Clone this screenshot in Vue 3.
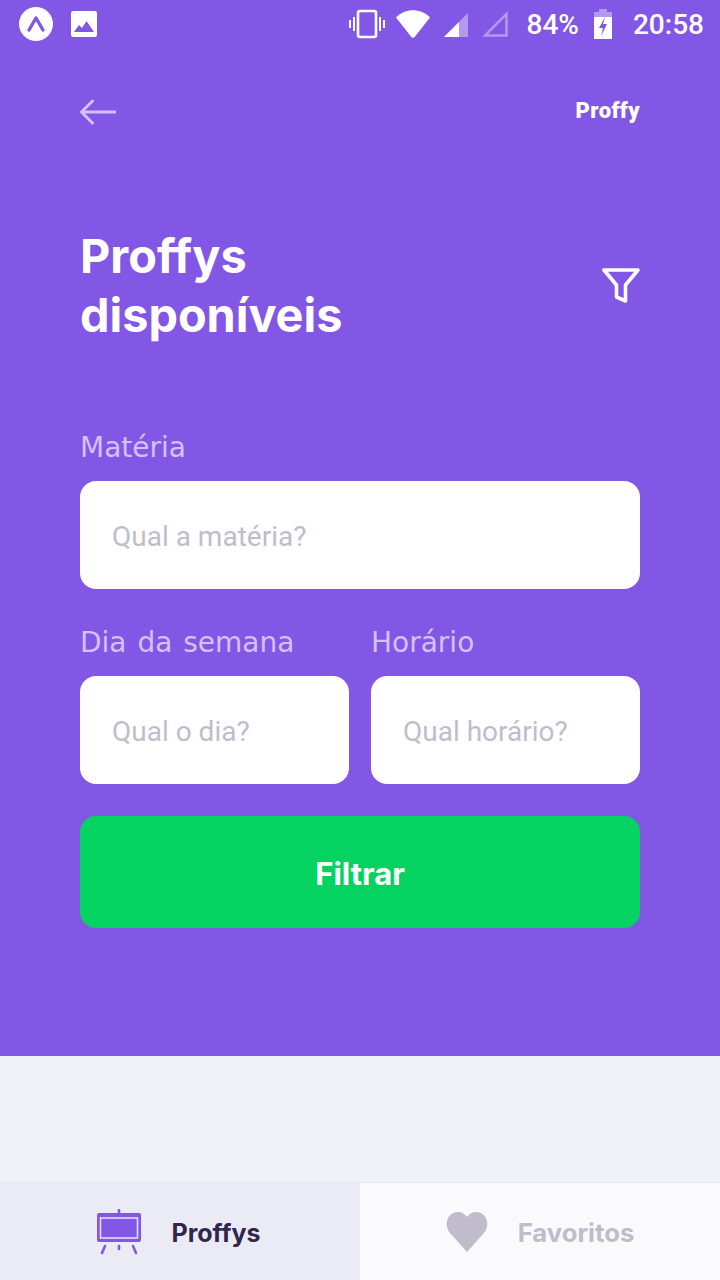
<template>
  <div class="screen">
    <section class="hero">
      <!-- Status bar -->
      <div class="status-bar">
        <div class="status-left">
          <svg class="ic-expo" width="36" height="36" viewBox="0 0 36 36">
            <circle cx="18" cy="18" r="17" fill="#fff" />
            <path d="M11 24 L18 12 L25 24" fill="none" stroke="#8257E5" stroke-width="3.4" stroke-linecap="round" stroke-linejoin="round" />
          </svg>
          <svg width="26" height="26" viewBox="0 0 26 26">
            <rect width="26" height="26" rx="2" fill="#fff" />
            <path d="M3 21 L8 14 L11 17 L15.500 10 L23 21 Z" fill="#8257E5" />
          </svg>
        </div>
        <div class="status-right">
          <svg width="36" height="30" viewBox="0 0 36 30" fill="none" stroke="#fff">
            <rect x="9" y="2" width="18" height="26" rx="2" stroke-width="2.600" />
            <path d="M5 8 V22 M31 8 V22" stroke-width="2" />
            <path d="M1 11 V19 M35 11 V19" stroke-width="2" />
          </svg>
          <svg class="ic-wifi" width="34" height="30" viewBox="0 0 36 30">
            <path d="M0 8 C10 -2 26 -2 36 8 L19.500 29 Q18 30 16.500 29 Z" fill="#fff" />
          </svg>
          <svg class="ic-signal" width="26" height="26" viewBox="0 0 26 26">
            <path d="M0 26 L24 2 V26 Z" fill="#fff" fill-opacity="0.4" />
            <path d="M0 26 L15 11 V26 Z" fill="#fff" />
          </svg>
          <svg class="ic-signal2" width="26" height="26" viewBox="0 0 26 26">
            <path d="M3 24.500 L24.500 3 V24.500 Z" fill="none" stroke="#fff" stroke-opacity="0.4" stroke-width="2.400" />
          </svg>
          <span class="pct">84%</span>
          <svg class="ic-batt" width="18" height="30" viewBox="0 0 18 30">
            <path d="M5 0 H13 V3 H18 V8 H0 V3 H5 Z" fill="#fff" fill-opacity="0.4" />
            <path d="M0 8 H18 V30 H0 Z" fill="#fff" />
            <path d="M11 8 L5 19 H9 L7 27 L13 15 H9 Z" fill="#8257E5" />
          </svg>
          <span class="clock">20:58</span>
        </div>
      </div>

      <!-- Top bar -->
      <div class="top-bar">
        <svg width="36" height="26" viewBox="0 0 36 26" fill="none" stroke="#D4C2FF" stroke-width="3" stroke-linecap="round" stroke-linejoin="round">
          <path d="M1.500 13 H35 M12.500 2 L1.500 13 L12.500 24" />
        </svg>
        <span class="logo">Proffy</span>
      </div>

      <!-- Title -->
      <div class="title-row">
        <h1 class="title">Proffys<br />disponíveis</h1>
        <svg class="ic-filter" width="38" height="36" viewBox="0 0 38 36" fill="none" stroke="#fff" stroke-width="3.600" stroke-linejoin="round">
          <path d="M2 2 H36 L23.500 17 V33 L14.500 29 V17 Z" />
        </svg>
      </div>

      <!-- Form -->
      <form class="filters" @submit.prevent>
        <div class="field">
          <label class="label">Matéria</label>
          <input class="input" placeholder="Qual a matéria?" />
        </div>
        <div class="field-row">
          <div class="field">
            <label class="label">Dia da semana</label>
            <input class="input" placeholder="Qual o dia?" />
          </div>
          <div class="field">
            <label class="label">Horário</label>
            <input class="input" placeholder="Qual horário?" />
          </div>
        </div>
        <button class="submit" type="submit">Filtrar</button>
      </form>
    </section>

    <div class="spacer"></div>

    <!-- Tabs -->
    <nav class="tabs">
      <div class="tab tab-active">
        <svg width="46" height="46" viewBox="1 0 46 46" fill="none" stroke="#8257E5" stroke-linecap="round">
          <path d="M23 1 V4" stroke-width="2.600" />
          <rect x="1" y="4" width="44" height="29" rx="2" fill="#8257E5" stroke="none" />
          <rect x="4.500" y="9" width="37" height="20" fill="#8257E5" stroke="#E4DDF8" stroke-width="1.600" />
          <path d="M9 37 L6 44 M23 37 V40 M37 37 L40 44" stroke-width="2.600" />
        </svg>
        <span class="tab-label">Proffys</span>
      </div>
      <div class="tab">
        <svg width="42" height="40" viewBox="0 0 42 40">
          <path d="M21 40 L4 21 C-3 12 2 0 12 0 C16 0 19 2 21 5 C23 2 26 0 30 0 C40 0 45 12 38 21 Z" fill="#C1BCCC" />
        </svg>
        <span class="tab-label tab-label-off">Favoritos</span>
      </div>
    </nav>
  </div>
</template>

<script setup>
</script>

<style>
body {
  margin: 0;
}
</style>

<style scoped>
.screen {
  width: 720px;
  height: 1280px;
  display: flex;
  flex-direction: column;
  background: #f0f0f7;
  font-family: "Inter", sans-serif;
  overflow: hidden;
}

.hero {
  height: 1056px;
  box-sizing: border-box;
  background: #8257e5;
}

/* Status bar */
.status-bar {
  height: 48px;
  display: flex;
  align-items: center;
  justify-content: space-between;
  padding: 0 16px 0 18px;
}

.status-left {
  display: flex;
  align-items: center;
  gap: 17px;
}

.status-right {
  display: flex;
  align-items: center;
  font-family: "Roboto", sans-serif;
  font-size: 28px;
  font-weight: 500;
  color: #fff;
}

.ic-wifi {
  margin-left: 11px;
}

.ic-signal {
  margin-left: 14px;
}

.ic-signal2 {
  margin-left: 12px;
}

.pct {
  margin-left: 19px;
}

.ic-batt {
  margin-left: 15px;
}

.clock {
  margin-left: 21px;
}

/* Top bar */
.top-bar {
  display: flex;
  align-items: center;
  justify-content: space-between;
  padding: 51px 80px 0;
  height: 26px;
}

.logo {
  padding-bottom: 4px;
  font-family: "Roboto", sans-serif;
  font-size: 22px;
  font-weight: 900;
  letter-spacing: 0.4px;
  color: #fff;
}

/* Title */
.title-row {
  display: flex;
  align-items: center;
  justify-content: space-between;
  padding: 102px 80px 0;
}

.title {
  margin: 0;
  font-size: 46.8px;
  line-height: 59px;
  font-weight: 700;
  color: #fff;
}

/* Form */
.filters {
  display: flex;
  flex-direction: column;
  padding: 81px 80px 0;
}

.field {
  display: flex;
  flex-direction: column;
  flex: 1;
  min-width: 0;
}

.field-row {
  display: flex;
  gap: 22px;
  margin-top: 32px;
}

.label {
  font-family: "DejaVu Sans", sans-serif;
  font-size: 28px;
  word-spacing: 2px;
  line-height: 44px;
  height: 55px;
  color: #d4c2ff;
}

.input {
  box-sizing: border-box;
  width: 100%;
  height: 108px;
  padding: 2px 32px 0;
  border: 0;
  border-radius: 16px;
  background: #fff;
  font-family: "Roboto", sans-serif;
  font-size: 28px;
}

.input::placeholder {
  color: #c1bccc;
  opacity: 1;
}

.submit {
  height: 112px;
  margin-top: 32px;
  padding: 2px 0 0;
  border: 0;
  border-radius: 16px;
  background: #04d361;
  font-family: "Inter", sans-serif;
  font-size: 31px;
  font-weight: 700;
  color: #fff;
}

.spacer {
  flex: 1;
}

/* Tabs */
.tabs {
  height: 98px;
  box-sizing: border-box;
  display: flex;
  border-top: 1px solid #e6e6f0;
}

.tab {
  box-sizing: border-box;
  width: 50%;
  display: flex;
  align-items: center;
  justify-content: center;
  gap: 30px;
  background: #fafafc;
}

.tab-active {
  gap: 28px;
  padding-right: 2px;
  background: #ebebf5;
}

.tab-label {
  padding-top: 2px;
  font-size: 25px;
  font-weight: 700;
  color: #32264d;
}

.tab-label-off {
  font-size: 25.7px;
  color: #c1bccc;
}
</style>
